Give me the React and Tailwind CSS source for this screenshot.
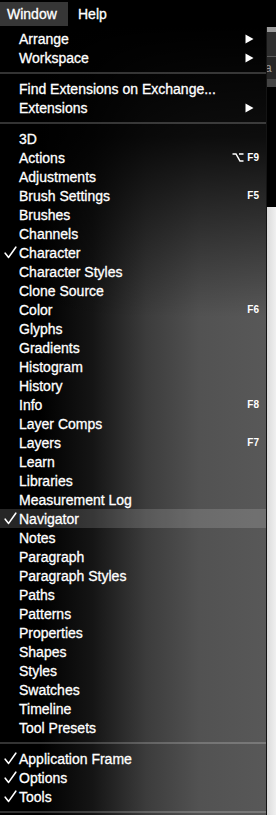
import React from "react";

const Check = () => (
  <svg width="13" height="13" viewBox="0 0 13 13" className="block">
    <path d="M1.2 7.2 L4.6 11.4 L11.8 1.2" fill="none" stroke="#fff" strokeWidth="1.6" strokeLinecap="round" strokeLinejoin="round" />
  </svg>
);

const Arrow = () => (
  <svg width="9" height="10" viewBox="0 0 9 10" className="block">
    <polygon points="0.5,0.5 8.5,5 0.5,9.5" fill="#fff" />
  </svg>
);

const OptionKey = () => (
  <svg width="12" height="9" viewBox="0 0 12 9" className="block">
    <path d="M0.5 1 H4 L8 8 H11.5 M7 1 H11.5" fill="none" stroke="#fff" strokeWidth="1.5" />
  </svg>
);

function Row({ label, check, shortcut, option, arrow, highlight }) {
  return (
    <div className={"flex h-[19px] items-center pr-[7px] " + (highlight ? "bg-white/15" : "")}>
      <div className="flex w-[19px] shrink-0 items-center justify-center pl-[1px]">{check ? <Check /> : null}</div>
      <div className="flex-1 whitespace-nowrap text-[14px] leading-none text-white [-webkit-text-stroke:0.3px_#fff]">{label}</div>
      {shortcut ? (
        <div className="flex items-center gap-[3px] text-[10px] font-bold leading-none text-white">
          {option ? <OptionKey /> : null}
          <span>{shortcut}</span>
        </div>
      ) : null}
      {arrow ? (
        <div className="pr-[5px]">
          <Arrow />
        </div>
      ) : null}
    </div>
  );
}

const Sep = () => (
  <div className="flex h-[12px] items-center">
    <div className="h-[2px] w-full bg-white/20" />
  </div>
);

const panels = [
  { label: "3D" },
  { label: "Actions", shortcut: "F9", option: true },
  { label: "Adjustments" },
  { label: "Brush Settings", shortcut: "F5" },
  { label: "Brushes" },
  { label: "Channels" },
  { label: "Character", check: true },
  { label: "Character Styles" },
  { label: "Clone Source" },
  { label: "Color", shortcut: "F6" },
  { label: "Glyphs" },
  { label: "Gradients" },
  { label: "Histogram" },
  { label: "History" },
  { label: "Info", shortcut: "F8" },
  { label: "Layer Comps" },
  { label: "Layers", shortcut: "F7" },
  { label: "Learn" },
  { label: "Libraries" },
  { label: "Measurement Log" },
  { label: "Navigator", check: true, highlight: true },
  { label: "Notes" },
  { label: "Paragraph" },
  { label: "Paragraph Styles" },
  { label: "Paths" },
  { label: "Patterns" },
  { label: "Properties" },
  { label: "Shapes" },
  { label: "Styles" },
  { label: "Swatches" },
  { label: "Timeline" },
  { label: "Tool Presets" },
];

export default function App() {
  return (
    <div className="flex h-[815px] w-[276px] flex-col overflow-hidden bg-black font-['Liberation_Sans',Arial,sans-serif]">
      <div className="flex h-[27px] shrink-0 items-start bg-black text-[14px] text-white [-webkit-text-stroke:0.3px_#fff]">
        <div className="mt-[2px] flex h-[24px] w-[68px] items-center bg-[#363636] pl-[7px]">Window</div>
        <div className="ml-[10px] mt-[2px] flex h-[24px] items-center">Help</div>
      </div>
      <div className="flex flex-1">
        <div className="w-[267px] shrink-0 border-r border-[#141414] bg-[linear-gradient(to_bottom,#000_0px,rgba(0,0,0,0.85)_110px,rgba(0,0,0,0)_290px),linear-gradient(to_right,#000_15%,#151515_35%,#3c3c3c_55%,#525252_75%,#585858_100%)] pt-[2px]">
          <Row label="Arrange" arrow />
          <Row label="Workspace" arrow />
          <Sep />
          <Row label="Find Extensions on Exchange..." />
          <Row label="Extensions" arrow />
          <Sep />
          {panels.map((p) => (
            <Row key={p.label} {...p} />
          ))}
          <Sep />
          <Row label="Application Frame" check />
          <Row label="Options" check />
          <Row label="Tools" check />
          <Sep />
        </div>
        <div className="flex flex-1 flex-col">
          <div className="h-[5px] bg-[#9a9a9a]" />
          <div className="h-[24px] bg-[#2e2e2e]" />
          <div className="h-[1px] bg-[#5a5a5a]" />
          <div className="flex h-[22px] items-center overflow-hidden bg-[#262626] text-[12px] leading-none text-[#9a9a9a]">
            <span className="-ml-[2px]">a</span>
          </div>
          <div className="h-[8px] bg-[#444]" />
          <div className="h-[120px] bg-black" />
          <div className="flex-1 bg-[linear-gradient(to_right,#dcdcdc,#f0f0f0)]" />
        </div>
      </div>
    </div>
  );
}
